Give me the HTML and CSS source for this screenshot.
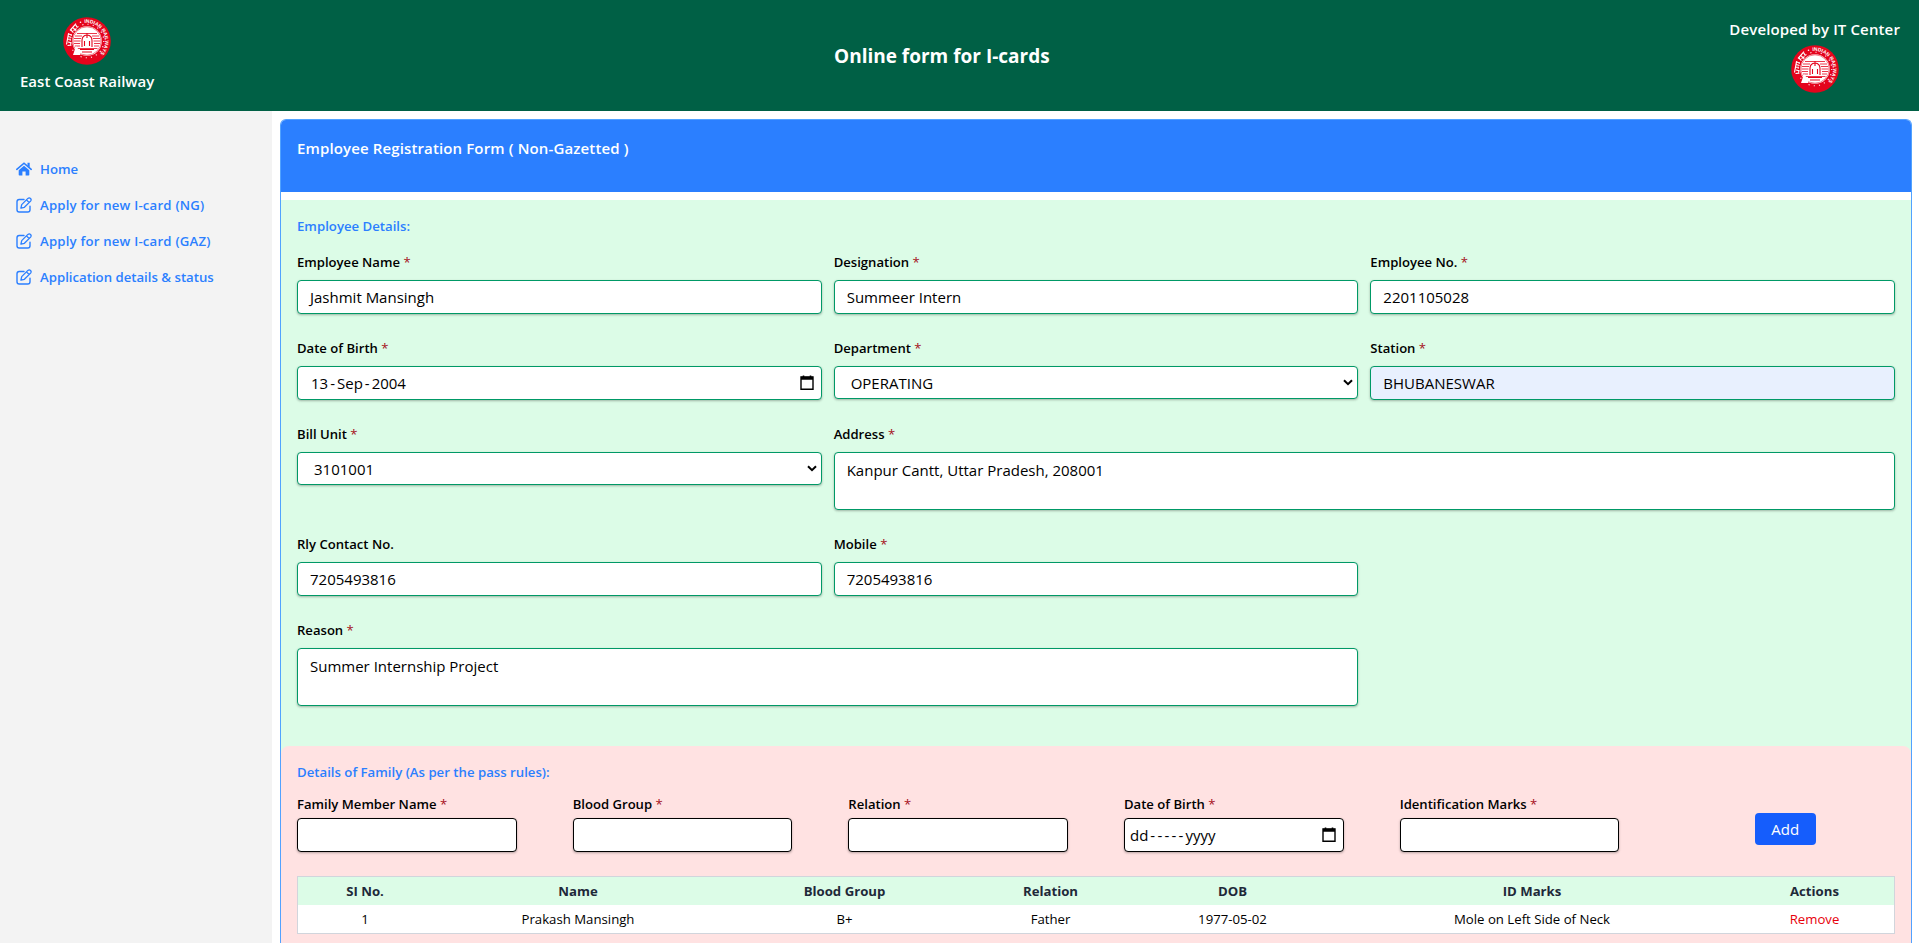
FILE: index.html
```html
<!DOCTYPE html>
<html lang="en">
<head>
<meta charset="utf-8">
<title>Online form for I-cards</title>
<link rel="stylesheet" href="styles.css">
</head>
<body>
<svg class="defs" width="0" height="0">
  <symbol id="logo" viewBox="0 0 48 48">
    <circle cx="24" cy="24" r="23.8" fill="#e4041c"/>
    <path d="M3.500 27.500 5.600 16.200M7 13.500l6-6.800M4.500 28.500l3-.4M5 25l3 .6-.5 2M4.800 22l3.200.2M5.200 19.500l3.200 1M6 17l2.800 1.300M8 13l2.400 2.600M10.300 10.800l2 2.400 1-2M12.800 8l1.600 2.800" fill="none" stroke="#fff" stroke-width="1.150"/>
    <circle cx="17.500" cy="5.300" r=".8" fill="#fff"/>
    <circle cx="24" cy="24" r="16.800" fill="none" stroke="#fff" stroke-width="1.100" stroke-dasharray="1.100 4.178"/>
    <circle cx="24" cy="24" r="14.800" fill="#fff"/>
    <path d="M14 16.500h20M12 19h7M29 19h7M11 21.500h7M30 21.500h7M10.500 24h7M30.500 24h7M11 26.500h6M31 26.500h6M12 29h5M31 29h5M13.500 31.500h21" stroke="#e4041c" stroke-width=".8"/>
    <path d="M19 30v-6.500q0-5 5-5.500 5 .5 5 5.500V30M24 16v5M21.500 24v5M26.500 24v5M17 32.500h14M19 35h10" fill="none" stroke="#e4041c" stroke-width="1.100"/>
    <circle cx="24" cy="24" r="14.200" fill="none" stroke="#e4041c" stroke-width=".5"/>
    <path d="M10 38l3-9 3 4 2 1-1 4z" fill="#fff"/>
  </symbol>
  <symbol id="house" viewBox="0 0 16 16">
    <path d="M.8 8.300 8 2.200l7.200 6.100" fill="none" stroke="currentColor" stroke-width="1.600" stroke-linecap="round"/>
    <path d="M11.500 1.800h2.200v4.600l-2.200-1.900zM8 4.800l5.300 4.400v4.600q0 .7-.7.7H9.600v-4H6.400v4H3.400q-.7 0-.7-.7V9.200z" fill="currentColor"/>
  </symbol>
  <symbol id="edit" viewBox="0 0 16 16">
    <path d="M8 2.500H3.200Q1 2.500 1 4.700v8Q1 15 3.200 15h8.600q2.200 0 2.200-2.300V9.300" fill="none" stroke="currentColor" stroke-width="1.400" stroke-linecap="round"/>
    <path d="M5.700 7.600 11.900 1.400q1.400-1.100 2.600.1t.1 2.600L8.400 10.300 4.900 11.100zM10.500 2.900l2.600 2.600" fill="none" stroke="currentColor" stroke-width="1.300" stroke-linejoin="round"/>
  </symbol>
  <symbol id="calendar" viewBox="0 0 14 16">
    <path d="M1 2h12v12.300H1z" fill="none" stroke="#000" stroke-width="1.400"/>
    <path d="M1 1.700h12v3H1zM2.700.4h1.600v2H2.700zM9.700.4h1.600v2H9.700z"/>
  </symbol>
  <symbol id="chevron" viewBox="0 0 10 7">
    <path d="M1 1.200 5 5.200l4-4" fill="none" stroke="#000" stroke-width="2"/>
  </symbol>
</svg>

<header class="topbar">
  <div class="brand brand-left">
    <svg class="logo" viewBox="0 0 48 48">
      <use href="#logo"/>
      <path id="ring1" d="M21.500 6 A18.2 18.2 0 0 1 35.500 38" fill="none"/>
      <text class="ring-text"><textPath href="#ring1">INDIAN RAILWAYS</textPath></text>
    </svg>
    <span>East Coast Railway</span>
  </div>
  <h1>Online form for I-cards</h1>
  <div class="brand brand-right">
    <span>Developed by IT Center</span>
    <svg class="logo" viewBox="0 0 48 48">
      <use href="#logo"/>
      <path id="ring2" d="M21.500 6 A18.2 18.2 0 0 1 35.500 38" fill="none"/>
      <text class="ring-text"><textPath href="#ring2">INDIAN RAILWAYS</textPath></text>
    </svg>
  </div>
</header>

<div class="layout">
  <nav class="sidebar">
    <a><svg><use href="#house"/></svg><span>Home</span></a>
    <a class="apply"><svg><use href="#edit"/></svg><span>Apply for new I-card (NG)</span></a>
    <a class="apply"><svg><use href="#edit"/></svg><span>Apply for new I-card (GAZ)</span></a>
    <a><svg><use href="#edit"/></svg><span>Application details &amp; status</span></a>
  </nav>

  <main class="card">
    <h2 class="card-title"><span>Employee Registration Form ( Non-Gazetted )</span></h2>
    <div class="form">
      <section class="employee">
        <h3>Employee Details:</h3>
        <div class="fields">
          <div><label>Employee Name <i>*</i></label><div class="input">Jashmit Mansingh</div></div>
          <div><label>Designation <i>*</i></label><div class="input">Summeer Intern</div></div>
          <div><label>Employee No. <i>*</i></label><div class="input">2201105028</div></div>
          <div><label>Date of Birth <i>*</i></label><div class="input date"><span>13<b>-</b>Sep<b>-</b>2004</span><svg class="cal"><use href="#calendar"/></svg></div></div>
          <div><label>Department <i>*</i></label><div class="input select"><span>OPERATING</span><svg class="chev"><use href="#chevron"/></svg></div></div>
          <div><label>Station <i>*</i></label><div class="input autofill">BHUBANESWAR</div></div>
          <div><label>Bill Unit <i>*</i></label><div class="input select"><span>3101001</span><svg class="chev"><use href="#chevron"/></svg></div></div>
          <div class="wide"><label>Address <i>*</i></label><div class="input area">Kanpur Cantt, Uttar Pradesh, 208001</div></div>
          <div><label>Rly Contact No.</label><div class="input">7205493816</div></div>
          <div class="mobile"><label>Mobile <i>*</i></label><div class="input">7205493816</div></div>
          <div class="wide"><label>Reason <i>*</i></label><div class="input area">Summer Internship Project</div></div>
        </div>
      </section>
      <section class="family">
        <h3>Details of Family (As per the pass rules):</h3>
        <div class="member">
          <div><label>Family Member Name <i>*</i></label><div class="input"></div></div>
          <div><label>Blood Group <i>*</i></label><div class="input"></div></div>
          <div><label>Relation <i>*</i></label><div class="input"></div></div>
          <div><label>Date of Birth <i>*</i></label><div class="input date"><span>dd<b class="blank">-----</b>yyyy</span><svg class="cal"><use href="#calendar"/></svg></div></div>
          <div><label>Identification Marks <i>*</i></label><div class="input"></div></div>
          <button type="button">Add</button>
        </div>
        <table>
          <colgroup><col class="c1"><col class="c2"><col class="c3"><col class="c4"><col class="c5"><col class="c6"><col class="c7"></colgroup>
          <thead><tr><th>SI No.</th><th>Name</th><th>Blood Group</th><th>Relation</th><th>DOB</th><th>ID Marks</th><th>Actions</th></tr></thead>
          <tbody><tr><td>1</td><td>Prakash Mansingh</td><td>B+</td><td>Father</td><td>1977-05-02</td><td>Mole on Left Side of Neck</td><td class="remove">Remove</td></tr></tbody>
        </table>
      </section>
    </div>
  </main>
</div>
</body>
</html>
```

FILE: styles.css
```css
* { box-sizing: border-box; }
body {
  margin: 0;
  height: 943px;
  overflow: hidden;
  background: #fff;
  color: #000;
  font: 15px/24px "Open Sans", "Noto Sans", sans-serif;
}
h1, h2, h3 { margin: 0; }
svg { display: block; flex: none; }
.defs { position: absolute; }
.ring-text { font: 700 5px "Liberation Sans", sans-serif; fill: #fff; }

.topbar {
  display: flex;
  justify-content: space-between;
  align-items: flex-start;
  height: 111px;
  padding: 17px 19px 0 20px;
  background: #006045;
  color: #fff;
  font-weight: 600;
}
.topbar h1 { padding-top: 25px; font-size: 19px; line-height: 28px; font-weight: 700; }
.brand { display: flex; flex-direction: column; align-items: center; white-space: nowrap; }
.brand-left { gap: 4px; }
.brand-right { gap: 4px; letter-spacing: .13px; }
.logo { width: 48px; height: 48px; }
.brand-left .ring-text, .brand-right .ring-text { letter-spacing: 0; }

.layout { display: flex; height: 832px; }
.sidebar {
  width: 272px;
  flex: none;
  padding: 48px 16px;
  display: flex;
  flex-direction: column;
  gap: 16px;
  background: #f3f3f3;
}
.sidebar a {
  display: flex;
  align-items: center;
  gap: 8px;
  color: #2b7fff;
  font-size: 13.200px;
  line-height: 20px;
  font-weight: 600;
  white-space: nowrap;
}
.sidebar .apply { letter-spacing: .2px; }
.sidebar svg { width: 16px; height: 16px; }

.card {
  flex: 1;
  margin: 8px 7px 0 8px;
  height: 824px;
  border: 1px solid #51a2ff;
  border-bottom: 0;
  border-radius: 6px 6px 0 0;
  overflow: hidden;
}
.card-title {
  height: 72px;
  padding: 16px;
  background: #2b7fff;
  color: #fff;
  font-size: 15px;
  font-weight: 600;
  letter-spacing: .13px;
}
.form { margin-top: 8px; background: #dcfce7; }
h3 { font-size: 13.200px; line-height: 20px; font-weight: 600; color: #2b7fff; }
.employee { padding: 16px 16px 40px; }
.fields {
  display: grid;
  grid-template-columns: repeat(3, 1fr);
  gap: 24px 12px;
  margin-top: 16px;
}
.wide { grid-column: span 2; }
.mobile { grid-column: 2 / 4; width: calc(50% - 6px); }
label { display: block; margin-bottom: 8px; font-size: 13.100px; line-height: 20px; font-weight: 600; }
label i { color: #a50f1a; font-style: normal; font-weight: 500; }
.input {
  display: flex;
  align-items: center;
  height: 34px;
  padding: 0 12px;
  background: #fff;
  border: 1px solid #096;
  border-radius: 4px;
  box-shadow: 0 1px 3px rgba(0, 0, 0, .16), 0 1px 2px rgba(0, 0, 0, .14);
}
.select { justify-content: space-between; height: 33px; padding: 0 4px 0 16px; }
.date { justify-content: space-between; padding: 0 7px 0 13px; }
.date b { margin: 0 2px; font-weight: 400; }
.date .blank { margin: 0 0 0 2px; letter-spacing: 2.200px; }
.cal { width: 14px; height: 16px; }
.chev { width: 10px; height: 7px; }
.autofill { background: #e8f0fe; }
.area { height: 58px; align-items: flex-start; padding-top: 5px; }

.family { height: 198px; padding: 16px; background: #ffe2e2; border-radius: 8px 8px 0 0; }
.member { display: grid; grid-template-columns: repeat(6, 1fr); gap: 56px; margin-top: 12px; }
.member label { margin-bottom: 4px; white-space: nowrap; }
.member .input { border-color: #000; }
.member .date { padding-left: 5px; }
button {
  justify-self: center;
  margin-top: 19px;
  width: 61px;
  height: 32px;
  padding: 0;
  border: 0;
  border-radius: 4px;
  background: #155dfc;
  color: #fff;
  font: inherit;
}
table {
  width: 100%;
  margin-top: 24px;
  table-layout: fixed;
  border-collapse: separate;
  border-spacing: 0;
  border: 1px solid #d1d5dc;
  background: #fff;
  font-size: 13.200px;
  line-height: 20px;
  text-align: center;
}
th, td { height: 28px; padding: 4px 0; }
th { background: #dcfce7; color: #1e2939; font-weight: 700; }
.remove { color: #e7000b; }
.c1 { width: 134px; } .c2 { width: 292px; } .c3 { width: 241px; } .c4 { width: 171px; }
.c5 { width: 193px; } .c6 { width: 406px; } .c7 { width: 159px; }
```
